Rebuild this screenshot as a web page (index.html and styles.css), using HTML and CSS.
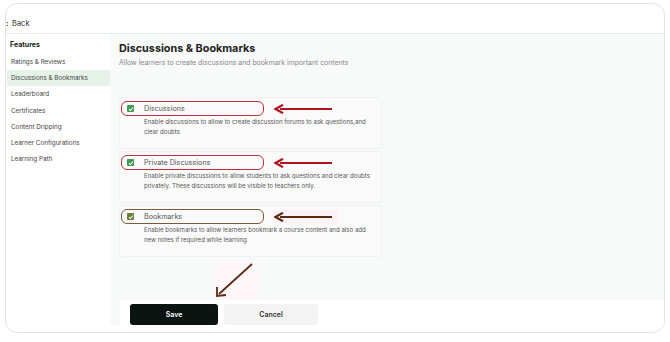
FILE: index.html
```html
<!DOCTYPE html>
<html lang="en">
<head>
    <meta charset="UTF-8">
    <meta name="viewport" content="width=device-width, initial-scale=1.0">
    <title>Discussions &amp; Bookmarks</title>
    <link rel="stylesheet" href="styles.css">
</head>
<body>
    <div class="window">
        <header class="topbar">
            <span class="back-icon">:</span>
            <span class="back-label">Back</span>
        </header>
        <div class="layout">
            <aside class="sidebar">
                <div class="side-title">Features</div>
                <div class="side-item">Ratings &amp; Reviews</div>
                <div class="side-item active">Discussions &amp; Bookmarks</div>
                <div class="side-item">Leaderboard</div>
                <div class="side-item">Certificates</div>
                <div class="side-item">Content Dripping</div>
                <div class="side-item">Learner Configurations</div>
                <div class="side-item">Learning Path</div>
            </aside>
            <main class="main">
                <section class="content">
                    <h1>Discussions &amp; Bookmarks</h1>
                    <p class="subtitle">Allow learners to create discussions and bookmark important contents</p>

                    <div class="cards">
                        <div class="card">
                            <div class="option-row">
                                <label class="option mark-red">
                                    <span class="check green">
                                        <svg viewBox="0 0 8 8" width="6" height="6"><path d="M1.3 4.2 L3.2 6 L6.8 2" fill="none" stroke="#fff" stroke-width="1.4"/></svg>
                                    </span>
                                    Discussions
                                </label>
                                <svg class="arrow" viewBox="0 0 60 10" width="60" height="10"><path d="M58 5 H6" stroke="#b3141e" stroke-width="2.2"/><path d="M9 0.8 L1.5 5 L9 9.2" fill="none" stroke="#b3141e" stroke-width="2.2"/></svg>
                            </div>
                            <p class="desc">Enable discussions to allow to create discussion forums to ask questions,and clear doubts</p>
                        </div>

                        <div class="card">
                            <div class="option-row">
                                <label class="option mark-red">
                                    <span class="check green">
                                        <svg viewBox="0 0 8 8" width="6" height="6"><path d="M1.3 4.2 L3.2 6 L6.8 2" fill="none" stroke="#fff" stroke-width="1.4"/></svg>
                                    </span>
                                    Private Discussions
                                </label>
                                <svg class="arrow" viewBox="0 0 60 10" width="60" height="10"><path d="M58 5 H6" stroke="#b3141e" stroke-width="2.2"/><path d="M9 0.8 L1.5 5 L9 9.2" fill="none" stroke="#b3141e" stroke-width="2.2"/></svg>
                            </div>
                            <p class="desc">Enable private discussions to allow students to ask questions and clear doubts privately. These discussions will be visible to teachers only.</p>
                        </div>

                        <div class="card">
                            <div class="option-row">
                                <label class="option mark-brown">
                                    <span class="check olive">
                                        <svg viewBox="0 0 8 8" width="6" height="6"><path d="M1.3 4.2 L3.2 6 L6.8 2" fill="none" stroke="#fff" stroke-width="1.4"/></svg>
                                    </span>
                                    Bookmarks
                                </label>
                                <span class="arrow-glow">
                                    <svg class="arrow" viewBox="0 0 60 10" width="60" height="10"><path d="M58 5 H6" stroke="#5a2a12" stroke-width="2.2"/><path d="M9 0.8 L1.5 5 L9 9.2" fill="none" stroke="#5a2a12" stroke-width="2.2"/></svg>
                                </span>
                            </div>
                            <p class="desc">Enable bookmarks to allow learners bookmark a course content and also add new notes if required while learning</p>
                        </div>
                    </div>

                    <svg class="save-pointer" viewBox="0 0 50 42" width="50" height="42">
                        <rect x="4" y="2" width="44" height="38" fill="#fdf6f9"/>
                        <path d="M42 4 L9 34" stroke="#5a2a12" stroke-width="1.8"/>
                        <path d="M7 27 L7 36 L16 35" fill="none" stroke="#5a2a12" stroke-width="1.8"/>
                    </svg>
                </section>
                <footer class="actions">
                    <button class="btn btn-save">Save</button>
                    <button class="btn btn-cancel">Cancel</button>
                </footer>
            </main>
        </div>
    </div>
</body>
</html>
```

FILE: styles.css
```css
* {
    box-sizing: border-box;
}
body {
    margin: 0;
    background-color: #ffffff;
    font-family: 'Inter', 'Liberation Sans', sans-serif;
    color: #333;
}
.window {
    margin: 3px 5px 0 5px;
    width: 660px;
    height: 330px;
    border: 1px solid #e2e4e8;
    border-radius: 12px;
    overflow: hidden;
    display: flex;
    flex-direction: column;
    padding-bottom: 7px;
}
.topbar {
    height: 30px;
    flex-shrink: 0;
    border-bottom: 1px solid #e8eaed;
    display: flex;
    align-items: center;
    padding-top: 10px;
    font-size: 7.5px;
    color: #333;
}
.back-icon {
    width: 6px;
    font-weight: 600;
}
.layout {
    flex: 1;
    display: flex;
}
.sidebar {
    width: 104px;
    flex-shrink: 0;
    padding-top: 6px;
}
.side-title {
    font-size: 7px;
    font-weight: 700;
    color: #222;
    height: 10px;
    line-height: 10px;
    padding-left: 4px;
    margin-bottom: 4px;
}
.side-item {
    font-size: 6.3px;
    color: #444;
    height: 16.2px;
    line-height: 16.2px;
    padding-left: 4px;
    margin-left: 1px;
}
.side-item.active {
    background-color: #e7f2e9;
}
.main {
    flex: 1;
    display: flex;
    flex-direction: column;
    background-color: #f8f9f9;
}
.content {
    flex: 1;
    position: relative;
    padding: 8px 0 0 9px;
}
h1 {
    margin: 0;
    font-size: 10.8px;
    font-weight: 700;
    color: #222;
    line-height: 14px;
}
.subtitle {
    margin: 2px 0 0 0;
    font-size: 6.9px;
    color: #888;
    line-height: 10px;
}
.cards {
    margin-top: 29px;
    width: 263px;
    display: flex;
    flex-direction: column;
    gap: 2px;
}
.card {
    height: 52px;
    background-color: #fafafa;
    border: 1px solid #f1f1f1;
    border-radius: 3px;
    padding: 3px 0 0 1px;
}
.option-row {
    display: flex;
    align-items: center;
}
.option {
    width: 143px;
    height: 15px;
    border-radius: 6px;
    display: flex;
    align-items: center;
    padding-left: 5px;
    font-size: 7.2px;
    color: #555;
}
.mark-red {
    border: 1.5px solid #c0303c;
}
.mark-brown {
    border: 1.5px solid #7b5a3c;
}
.check {
    width: 7px;
    height: 7px;
    border-radius: 1px;
    display: flex;
    align-items: center;
    justify-content: center;
    margin-right: 10px;
}
.check.green {
    background-color: #3e9d52;
}
.check.olive {
    background-color: #6f7b3a;
}
.arrow {
    display: block;
    margin-left: 10px;
}
.arrow-glow {
    display: block;
    margin-left: 8px;
    padding: 2px 4px 2px 2px;
    background-color: #fdf3f7;
}
.arrow-glow .arrow {
    margin-left: 0;
}
.desc {
    margin: 1px 0 0 23px;
    font-size: 6.1px;
    line-height: 10px;
    color: #555;
    width: 232px;
}
.save-pointer {
    position: absolute;
    left: 100px;
    top: 226px;
}
.actions {
    height: 25px;
    margin-left: 10px;
    background-color: #ffffff;
    display: flex;
    align-items: flex-end;
    gap: 6px;
    padding-left: 10px;
}
.btn {
    height: 21px;
    border: none;
    border-radius: 3px;
    font-family: 'Inter', 'Liberation Sans', sans-serif;
    font-size: 7px;
    font-weight: 600;
    cursor: pointer;
}
.btn-save {
    width: 88px;
    background-color: #0b1410;
    color: #fff;
}
.btn-cancel {
    width: 94px;
    background-color: #f3f3f4;
    color: #333;
}
```
